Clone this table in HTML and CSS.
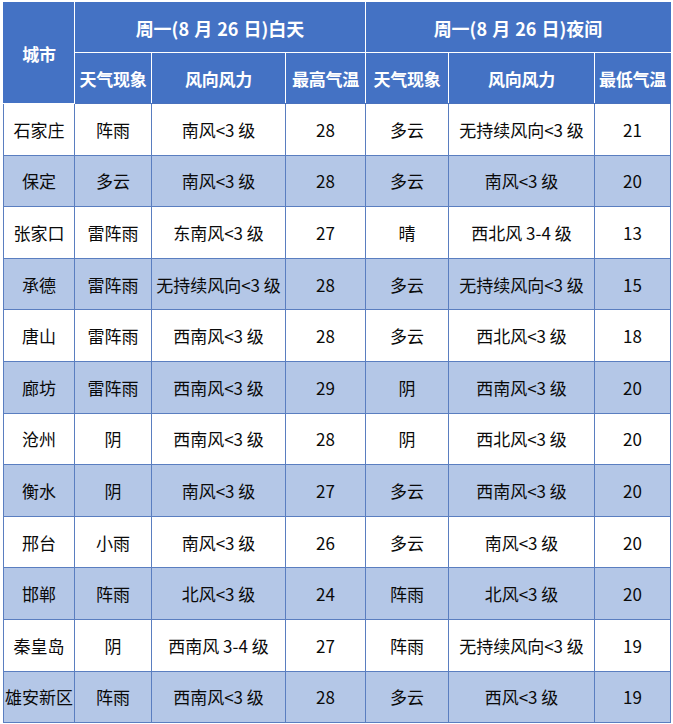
FILE: index.html
```html
<!DOCTYPE html>
<html lang="zh">
<head>
<meta charset="utf-8">
<link rel="stylesheet" href="styles.css">
</head>
<body>
<table class="wx">
  <colgroup>
    <col class="c1"><col class="c2"><col class="c3"><col class="c4"><col class="c5"><col class="c6"><col class="c7">
  </colgroup>
  <thead>
    <tr class="h1">
      <th rowspan="2">城市</th>
      <th colspan="3" class="day">周一(8 月 26 日)白天</th>
      <th colspan="3" class="day">周一(8 月 26 日)夜间</th>
    </tr>
    <tr class="h2">
      <th>天气现象</th><th>风向风力</th><th>最高气温</th>
      <th>天气现象</th><th>风向风力</th><th>最低气温</th>
    </tr>
  </thead>
  <tbody>
    <tr><td>石家庄</td><td>阵雨</td><td>南风&lt;3 级</td><td>28</td><td>多云</td><td>无持续风向&lt;3 级</td><td>21</td></tr>
    <tr><td>保定</td><td>多云</td><td>南风&lt;3 级</td><td>28</td><td>多云</td><td>南风&lt;3 级</td><td>20</td></tr>
    <tr><td>张家口</td><td>雷阵雨</td><td>东南风&lt;3 级</td><td>27</td><td>晴</td><td>西北风 3-4 级</td><td>13</td></tr>
    <tr><td>承德</td><td>雷阵雨</td><td>无持续风向&lt;3 级</td><td>28</td><td>多云</td><td>无持续风向&lt;3 级</td><td>15</td></tr>
    <tr><td>唐山</td><td>雷阵雨</td><td>西南风&lt;3 级</td><td>28</td><td>多云</td><td>西北风&lt;3 级</td><td>18</td></tr>
    <tr><td>廊坊</td><td>雷阵雨</td><td>西南风&lt;3 级</td><td>29</td><td>阴</td><td>西南风&lt;3 级</td><td>20</td></tr>
    <tr><td>沧州</td><td>阴</td><td>西南风&lt;3 级</td><td>28</td><td>阴</td><td>西北风&lt;3 级</td><td>20</td></tr>
    <tr><td>衡水</td><td>阴</td><td>南风&lt;3 级</td><td>27</td><td>多云</td><td>西南风&lt;3 级</td><td>20</td></tr>
    <tr><td>邢台</td><td>小雨</td><td>南风&lt;3 级</td><td>26</td><td>多云</td><td>南风&lt;3 级</td><td>20</td></tr>
    <tr><td>邯郸</td><td>阵雨</td><td>北风&lt;3 级</td><td>24</td><td>阵雨</td><td>北风&lt;3 级</td><td>20</td></tr>
    <tr><td>秦皇岛</td><td>阴</td><td>西南风 3-4 级</td><td>27</td><td>阵雨</td><td>无持续风向&lt;3 级</td><td>19</td></tr>
    <tr><td>雄安新区</td><td>阵雨</td><td>西南风&lt;3 级</td><td>28</td><td>多云</td><td>西风&lt;3 级</td><td>19</td></tr>
  </tbody>
</table>
</body>
</html>
```
FILE: styles.css
```css
html, body {
  margin: 0;
  padding: 0;
  background: #ffffff;
}
body {
  padding: 2px 0 0 3px;
  font-family: "Noto Sans CJK SC", "Noto Sans", sans-serif;
}
.wx {
  border-collapse: collapse;
  table-layout: fixed;
  width: 667px;
  border: 1px solid #4a72bd;
}
.c1 { width: 71px; }
.c2 { width: 77px; }
.c3 { width: 134px; }
.c4 { width: 80px; }
.c5 { width: 83px; }
.c6 { width: 146px; }
.c7 { width: 76px; }

.wx th {
  background: #4472c4;
  color: #ffffff;
  font-weight: bold;
  font-size: 17px;
  border: 1px solid #ffffff;
  padding: 0;
  text-align: center;
  white-space: nowrap;
  letter-spacing: -0.3px;
}
.wx th.day {
  font-size: 18px;
  letter-spacing: 0;
  word-spacing: 1px;
}
.wx .h1 th { height: 49px; }
.wx .h2 th { height: 50px; }
.wx thead tr:first-child th { border-top-color: #4472c4; }
.wx thead th:first-child { border-left-color: #4472c4; }
.wx thead th:last-child { border-right-color: #4472c4; }
.wx .h2 th:last-child { border-right-color: #4472c4; }
.wx .h2 th { border-bottom-color: #4a72bd; }

.wx td {
  font-size: 17px;
  color: #0a0a0a;
  border: 1px solid #5a7ec0;
  padding: 0;
  height: 50.6px;
  text-align: center;
  white-space: nowrap;
}
.wx tbody tr:nth-child(even) td {
  background: #b4c7e7;
}
```
